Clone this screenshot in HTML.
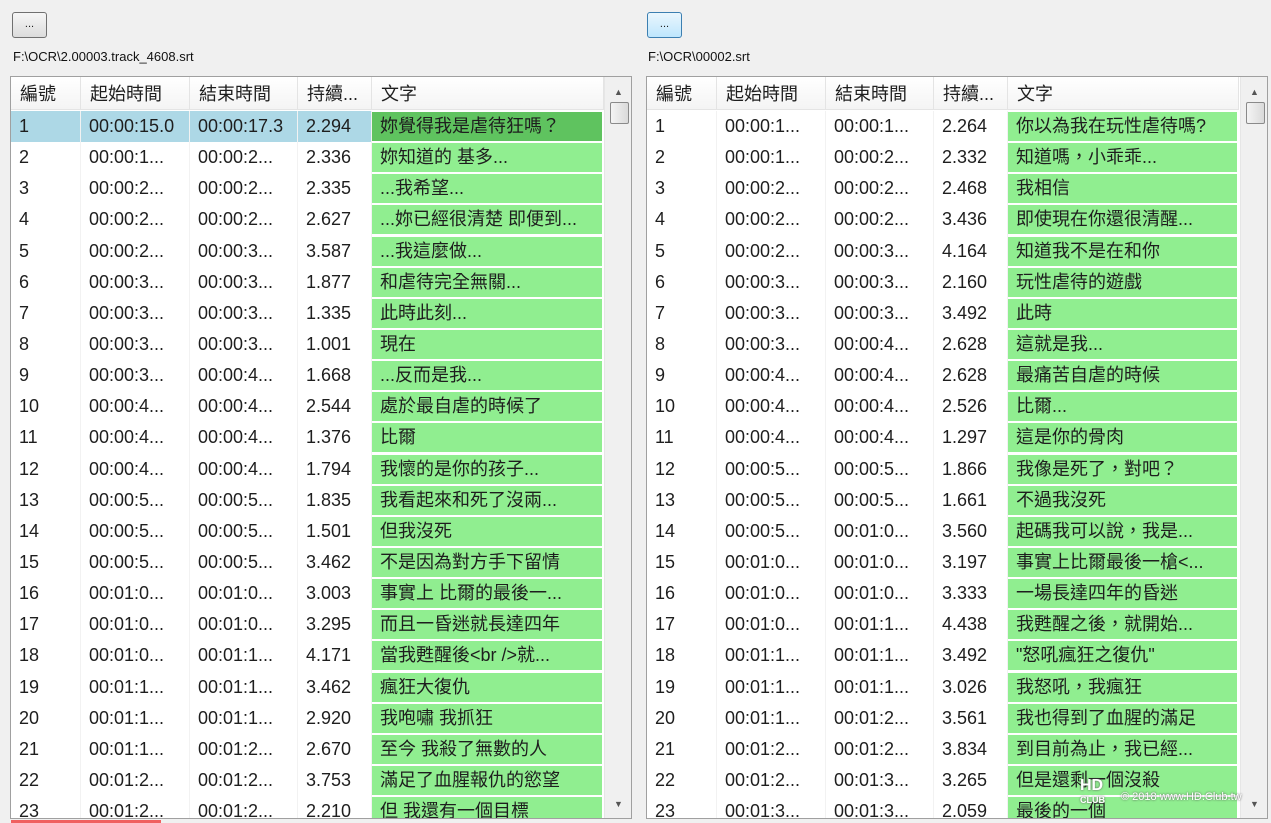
<!DOCTYPE html><html><head><meta charset="utf-8"><style>
body{margin:0;width:1271px;height:823px;background:#f0f0f0;position:relative;overflow:hidden;font-family:"Liberation Sans","Noto Sans CJK TC",sans-serif;color:#1e1e1e}
.btn{position:absolute;top:12px;width:33px;height:24px;border:1px solid #707070;border-radius:3px;background:linear-gradient(#f6f6f6,#dcdcdc);font-size:11px;text-align:center;line-height:22px}
.path{position:absolute;top:49px;font-size:13px;color:#111}
.tbl{position:absolute;top:76px;width:620px;height:741px;border:1px solid #a0a0a0;background:#fff;overflow:hidden}
.hdr{position:absolute;left:0;top:0;height:32px;display:flex;background:linear-gradient(#fff,#f4f4f4);border-bottom:1px solid #e4e4e4}
.hdr div{border-right:1px solid #e4e4e4;font-size:18px;line-height:35px;padding-left:9px;box-sizing:border-box}
.rows{position:absolute;left:0;top:34px}
.r{display:flex;height:31.15px;font-size:18px}
.r div{box-sizing:border-box;padding-left:8px;line-height:31px;white-space:nowrap;overflow:hidden;border-right:1px solid #f2f2f2}
.r .g{background:#90ee90;height:29px;margin-top:1px;line-height:29px;border-right:none}
.sel div{background:#add8e6}
.sel .g{background:#5fc35f}
.sb{position:absolute;right:0;top:0;width:26px;height:100%;background:#f0f0f0;border-left:1px solid #e6e6e6}
.thumb{position:absolute;left:5px;top:25px;width:17px;height:20px;border:1px solid #8a8a8a;border-radius:2px;background:linear-gradient(90deg,#f4f4f4,#dadada)}
.ar{position:absolute;left:9px;font-size:9px;color:#555}
</style></head><body>
<div class="btn" style="left:12px">...</div>
<div class="btn" style="left:647px;border-color:#3c7fb1;background:linear-gradient(#eaf6fd,#bee6fd)">...</div>
<div class="path" style="left:13px">F:\OCR\2.00003.track_4608.srt</div>
<div class="path" style="left:648px">F:\OCR\00002.srt</div>

<div class="tbl" style="left:10px">
<div class="hdr"><div style="width:70px">編號</div><div style="width:109px">起始時間</div><div style="width:108px">結束時間</div><div style="width:74px">持續...</div><div style="width:232px">文字</div></div>
<div class="rows">
<div class="r sel"><div style="width:70px">1</div><div style="width:109px">00:00:15.0</div><div style="width:108px">00:00:17.3</div><div style="width:74px">2.294</div><div class="g" style="width:230px">妳覺得我是虐待狂嗎？</div></div>
<div class="r"><div style="width:70px">2</div><div style="width:109px">00:00:1...</div><div style="width:108px">00:00:2...</div><div style="width:74px">2.336</div><div class="g" style="width:230px">妳知道的 基多...</div></div>
<div class="r"><div style="width:70px">3</div><div style="width:109px">00:00:2...</div><div style="width:108px">00:00:2...</div><div style="width:74px">2.335</div><div class="g" style="width:230px">...我希望...</div></div>
<div class="r"><div style="width:70px">4</div><div style="width:109px">00:00:2...</div><div style="width:108px">00:00:2...</div><div style="width:74px">2.627</div><div class="g" style="width:230px">...妳已經很清楚 即便到...</div></div>
<div class="r"><div style="width:70px">5</div><div style="width:109px">00:00:2...</div><div style="width:108px">00:00:3...</div><div style="width:74px">3.587</div><div class="g" style="width:230px">...我這麼做...</div></div>
<div class="r"><div style="width:70px">6</div><div style="width:109px">00:00:3...</div><div style="width:108px">00:00:3...</div><div style="width:74px">1.877</div><div class="g" style="width:230px">和虐待完全無關...</div></div>
<div class="r"><div style="width:70px">7</div><div style="width:109px">00:00:3...</div><div style="width:108px">00:00:3...</div><div style="width:74px">1.335</div><div class="g" style="width:230px">此時此刻...</div></div>
<div class="r"><div style="width:70px">8</div><div style="width:109px">00:00:3...</div><div style="width:108px">00:00:3...</div><div style="width:74px">1.001</div><div class="g" style="width:230px">現在</div></div>
<div class="r"><div style="width:70px">9</div><div style="width:109px">00:00:3...</div><div style="width:108px">00:00:4...</div><div style="width:74px">1.668</div><div class="g" style="width:230px">...反而是我...</div></div>
<div class="r"><div style="width:70px">10</div><div style="width:109px">00:00:4...</div><div style="width:108px">00:00:4...</div><div style="width:74px">2.544</div><div class="g" style="width:230px">處於最自虐的時候了</div></div>
<div class="r"><div style="width:70px">11</div><div style="width:109px">00:00:4...</div><div style="width:108px">00:00:4...</div><div style="width:74px">1.376</div><div class="g" style="width:230px">比爾</div></div>
<div class="r"><div style="width:70px">12</div><div style="width:109px">00:00:4...</div><div style="width:108px">00:00:4...</div><div style="width:74px">1.794</div><div class="g" style="width:230px">我懷的是你的孩子...</div></div>
<div class="r"><div style="width:70px">13</div><div style="width:109px">00:00:5...</div><div style="width:108px">00:00:5...</div><div style="width:74px">1.835</div><div class="g" style="width:230px">我看起來和死了沒兩...</div></div>
<div class="r"><div style="width:70px">14</div><div style="width:109px">00:00:5...</div><div style="width:108px">00:00:5...</div><div style="width:74px">1.501</div><div class="g" style="width:230px">但我沒死</div></div>
<div class="r"><div style="width:70px">15</div><div style="width:109px">00:00:5...</div><div style="width:108px">00:00:5...</div><div style="width:74px">3.462</div><div class="g" style="width:230px">不是因為對方手下留情</div></div>
<div class="r"><div style="width:70px">16</div><div style="width:109px">00:01:0...</div><div style="width:108px">00:01:0...</div><div style="width:74px">3.003</div><div class="g" style="width:230px">事實上 比爾的最後一...</div></div>
<div class="r"><div style="width:70px">17</div><div style="width:109px">00:01:0...</div><div style="width:108px">00:01:0...</div><div style="width:74px">3.295</div><div class="g" style="width:230px">而且一昏迷就長達四年</div></div>
<div class="r"><div style="width:70px">18</div><div style="width:109px">00:01:0...</div><div style="width:108px">00:01:1...</div><div style="width:74px">4.171</div><div class="g" style="width:230px">當我甦醒後&lt;br /&gt;就...</div></div>
<div class="r"><div style="width:70px">19</div><div style="width:109px">00:01:1...</div><div style="width:108px">00:01:1...</div><div style="width:74px">3.462</div><div class="g" style="width:230px">瘋狂大復仇</div></div>
<div class="r"><div style="width:70px">20</div><div style="width:109px">00:01:1...</div><div style="width:108px">00:01:1...</div><div style="width:74px">2.920</div><div class="g" style="width:230px">我咆嘯 我抓狂</div></div>
<div class="r"><div style="width:70px">21</div><div style="width:109px">00:01:1...</div><div style="width:108px">00:01:2...</div><div style="width:74px">2.670</div><div class="g" style="width:230px">至今 我殺了無數的人</div></div>
<div class="r"><div style="width:70px">22</div><div style="width:109px">00:01:2...</div><div style="width:108px">00:01:2...</div><div style="width:74px">3.753</div><div class="g" style="width:230px">滿足了血腥報仇的慾望</div></div>
<div class="r"><div style="width:70px">23</div><div style="width:109px">00:01:2...</div><div style="width:108px">00:01:2...</div><div style="width:74px">2.210</div><div class="g" style="width:230px">但 我還有一個目標</div></div>
</div>
<div class="sb"><div class="ar" style="top:10px">▲</div><div class="thumb"></div><div class="ar" style="top:722px">▼</div></div>
</div>
<div style="position:absolute;left:11px;top:820px;width:150px;height:3px;background:#f06060"></div>

<div class="tbl" style="left:646px">
<div class="hdr"><div style="width:70px">編號</div><div style="width:109px">起始時間</div><div style="width:108px">結束時間</div><div style="width:74px">持續...</div><div style="width:231px">文字</div></div>
<div class="rows">
<div class="r"><div style="width:70px">1</div><div style="width:109px">00:00:1...</div><div style="width:108px">00:00:1...</div><div style="width:74px">2.264</div><div class="g" style="width:229px">你以為我在玩性虐待嗎?</div></div>
<div class="r"><div style="width:70px">2</div><div style="width:109px">00:00:1...</div><div style="width:108px">00:00:2...</div><div style="width:74px">2.332</div><div class="g" style="width:229px">知道嗎，小乖乖...</div></div>
<div class="r"><div style="width:70px">3</div><div style="width:109px">00:00:2...</div><div style="width:108px">00:00:2...</div><div style="width:74px">2.468</div><div class="g" style="width:229px">我相信</div></div>
<div class="r"><div style="width:70px">4</div><div style="width:109px">00:00:2...</div><div style="width:108px">00:00:2...</div><div style="width:74px">3.436</div><div class="g" style="width:229px">即使現在你還很清醒...</div></div>
<div class="r"><div style="width:70px">5</div><div style="width:109px">00:00:2...</div><div style="width:108px">00:00:3...</div><div style="width:74px">4.164</div><div class="g" style="width:229px">知道我不是在和你</div></div>
<div class="r"><div style="width:70px">6</div><div style="width:109px">00:00:3...</div><div style="width:108px">00:00:3...</div><div style="width:74px">2.160</div><div class="g" style="width:229px">玩性虐待的遊戲</div></div>
<div class="r"><div style="width:70px">7</div><div style="width:109px">00:00:3...</div><div style="width:108px">00:00:3...</div><div style="width:74px">3.492</div><div class="g" style="width:229px">此時</div></div>
<div class="r"><div style="width:70px">8</div><div style="width:109px">00:00:3...</div><div style="width:108px">00:00:4...</div><div style="width:74px">2.628</div><div class="g" style="width:229px">這就是我...</div></div>
<div class="r"><div style="width:70px">9</div><div style="width:109px">00:00:4...</div><div style="width:108px">00:00:4...</div><div style="width:74px">2.628</div><div class="g" style="width:229px">最痛苦自虐的時候</div></div>
<div class="r"><div style="width:70px">10</div><div style="width:109px">00:00:4...</div><div style="width:108px">00:00:4...</div><div style="width:74px">2.526</div><div class="g" style="width:229px">比爾...</div></div>
<div class="r"><div style="width:70px">11</div><div style="width:109px">00:00:4...</div><div style="width:108px">00:00:4...</div><div style="width:74px">1.297</div><div class="g" style="width:229px">這是你的骨肉</div></div>
<div class="r"><div style="width:70px">12</div><div style="width:109px">00:00:5...</div><div style="width:108px">00:00:5...</div><div style="width:74px">1.866</div><div class="g" style="width:229px">我像是死了，對吧？</div></div>
<div class="r"><div style="width:70px">13</div><div style="width:109px">00:00:5...</div><div style="width:108px">00:00:5...</div><div style="width:74px">1.661</div><div class="g" style="width:229px">不過我沒死</div></div>
<div class="r"><div style="width:70px">14</div><div style="width:109px">00:00:5...</div><div style="width:108px">00:01:0...</div><div style="width:74px">3.560</div><div class="g" style="width:229px">起碼我可以說，我是...</div></div>
<div class="r"><div style="width:70px">15</div><div style="width:109px">00:01:0...</div><div style="width:108px">00:01:0...</div><div style="width:74px">3.197</div><div class="g" style="width:229px">事實上比爾最後一槍&lt;...</div></div>
<div class="r"><div style="width:70px">16</div><div style="width:109px">00:01:0...</div><div style="width:108px">00:01:0...</div><div style="width:74px">3.333</div><div class="g" style="width:229px">一場長達四年的昏迷</div></div>
<div class="r"><div style="width:70px">17</div><div style="width:109px">00:01:0...</div><div style="width:108px">00:01:1...</div><div style="width:74px">4.438</div><div class="g" style="width:229px">我甦醒之後，就開始...</div></div>
<div class="r"><div style="width:70px">18</div><div style="width:109px">00:01:1...</div><div style="width:108px">00:01:1...</div><div style="width:74px">3.492</div><div class="g" style="width:229px">"怒吼瘋狂之復仇"</div></div>
<div class="r"><div style="width:70px">19</div><div style="width:109px">00:01:1...</div><div style="width:108px">00:01:1...</div><div style="width:74px">3.026</div><div class="g" style="width:229px">我怒吼，我瘋狂</div></div>
<div class="r"><div style="width:70px">20</div><div style="width:109px">00:01:1...</div><div style="width:108px">00:01:2...</div><div style="width:74px">3.561</div><div class="g" style="width:229px">我也得到了血腥的滿足</div></div>
<div class="r"><div style="width:70px">21</div><div style="width:109px">00:01:2...</div><div style="width:108px">00:01:2...</div><div style="width:74px">3.834</div><div class="g" style="width:229px">到目前為止，我已經...</div></div>
<div class="r"><div style="width:70px">22</div><div style="width:109px">00:01:2...</div><div style="width:108px">00:01:3...</div><div style="width:74px">3.265</div><div class="g" style="width:229px">但是還剩一個沒殺</div></div>
<div class="r"><div style="width:70px">23</div><div style="width:109px">00:01:3...</div><div style="width:108px">00:01:3...</div><div style="width:74px">2.059</div><div class="g" style="width:229px">最後的一個</div></div>
</div>
<div class="sb"><div class="ar" style="top:10px">▲</div><div class="thumb"></div><div class="ar" style="top:722px">▼</div></div>
</div>
<div style="position:absolute;left:1080px;top:779px;color:#fff;font:bold 16px 'Liberation Sans',sans-serif;line-height:13px;text-shadow:0 0 2px #555">HD<br><span style="font-size:9px">CLUB</span></div>
<div style="position:absolute;left:1121px;top:791px;color:#fff;font:11px 'Liberation Sans',sans-serif;text-shadow:0 0 2px #444">© 2018 www.HD.Club.tw</div>
</body></html>
